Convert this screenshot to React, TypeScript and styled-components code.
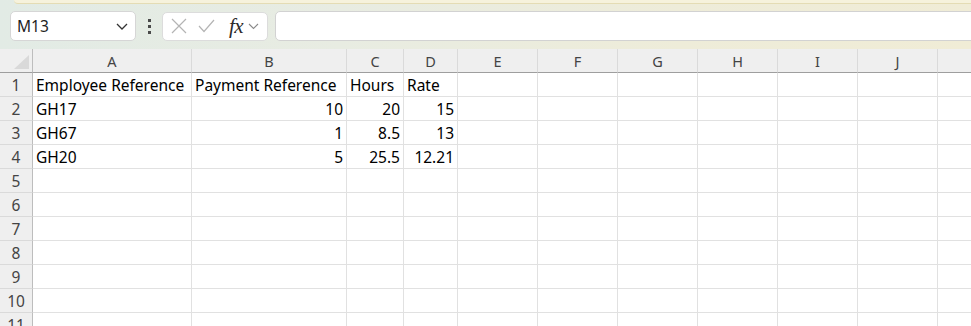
import React from "react";
import styled, { createGlobalStyle } from "styled-components";

const GlobalStyle = createGlobalStyle`
  html, body {
    margin: 0;
    padding: 0;
    background: #ffffff;
    overflow: hidden;
  }
  body {
    font-family: "Noto Sans", "Liberation Sans", sans-serif;
  }
`;

// K is only partly in view, its letter falls past the right edge
const COLUMNS = [
  { key: "A", label: "A", width: 159 },
  { key: "B", label: "B", width: 155 },
  { key: "C", label: "C", width: 57 },
  { key: "D", label: "D", width: 54 },
  { key: "E", label: "E", width: 80 },
  { key: "F", label: "F", width: 80 },
  { key: "G", label: "G", width: 80 },
  { key: "H", label: "H", width: 80 },
  { key: "I", label: "I", width: 80 },
  { key: "J", label: "J", width: 80 },
  { key: "K", label: "", width: 80 },
];

type CellValue = string | number | null;

const ROWS: CellValue[][] = [
  ["Employee Reference", "Payment Reference", "Hours", "Rate"],
  ["GH17", 10, 20, 15],
  ["GH67", 1, 8.5, 13],
  ["GH20", 5, 25.5, 12.21],
  [], [], [], [], [], [], [],
];

export default function App() {
  return (
    <>
      <GlobalStyle />
      <Page>
        <Toolbar>
          <TopStrip />
          <BarRow>
            <NameBox>
              <NameText>M13</NameText>
              <svg width="12" height="7" viewBox="0 0 12 7">
                <path d="M1 1 L6 6 L11 1" fill="none" stroke="#333" strokeWidth="1.3" />
              </svg>
            </NameBox>
            <Dots>
              <span />
              <span />
              <span />
            </Dots>
            <FormulaButtons>
              <svg width="16" height="16" viewBox="0 0 16 16">
                <path d="M1 1 L15 15 M15 1 L1 15" stroke="#b4b4b4" strokeWidth="1.2" />
              </svg>
              <svg width="17" height="14" viewBox="0 0 17 14">
                <path d="M1 7 L6 12.5 L16 1" fill="none" stroke="#b4b4b4" strokeWidth="1.2" />
              </svg>
              <Fx>fx</Fx>
              <svg width="11" height="7" viewBox="0 0 11 7">
                <path d="M1 1 L5.5 5.5 L10 1" fill="none" stroke="#8a8a8a" strokeWidth="1.1" />
              </svg>
            </FormulaButtons>
            <FormulaInput />
          </BarRow>
        </Toolbar>
        <Sheet $cols={COLUMNS.map((c) => `${c.width}px`).join(" ")}>
          <Corner>
            <CornerTriangle />
          </Corner>
          {COLUMNS.map((c) => (
            <ColHeader key={c.key}>{c.label}</ColHeader>
          ))}
          {ROWS.map((row, r) => (
            <React.Fragment key={r}>
              <RowHeader>{r + 1}</RowHeader>
              {COLUMNS.map((c, i) => {
                const v = row[i];
                const numeric = typeof v === "number";
                return (
                  <Cell key={c.key} $numeric={numeric}>
                    {v ?? ""}
                  </Cell>
                );
              })}
            </React.Fragment>
          ))}
        </Sheet>
      </Page>
    </>
  );
}

const Page = styled.div`
  width: 971px;
  height: 326px;
  overflow: hidden;
  display: flex;
  flex-direction: column;
`;

const Toolbar = styled.div`
  height: 49px;
  flex-shrink: 0;
  background: linear-gradient(90deg, #e2ebe5 0%, #e8ece2 35%, #eeecd9 70%, #f0ecd6 100%);
  display: flex;
  flex-direction: column;
`;

const TopStrip = styled.div`
  height: 3px;
  margin-left: 14px;
  background: #f6f2dc;
  border-bottom: 1px solid #e4dcb4;
  border-bottom-left-radius: 5px;
`;

const BarRow = styled.div`
  display: flex;
  align-items: center;
  margin-top: 7px;
  padding-left: 10px;
  height: 30px;
`;

const NameBox = styled.div`
  box-sizing: border-box;
  width: 126px;
  height: 30px;
  background: #ffffff;
  border: 1px solid #d6d6d6;
  border-radius: 5px;
  display: flex;
  align-items: center;
  justify-content: space-between;
  padding: 0 7px 0 6px;
`;

const NameText = styled.span`
  font-family: "Noto Sans", "Liberation Sans", sans-serif;
  font-size: 15.5px;
  color: #1f1f1f;
`;

const Dots = styled.div`
  width: 26px;
  display: flex;
  flex-direction: column;
  align-items: center;
  gap: 3px;

  span {
    width: 3px;
    height: 3px;
    background: #4a4a4a;
  }
`;

const FormulaButtons = styled.div`
  box-sizing: border-box;
  width: 106px;
  height: 29px;
  background: #ffffff;
  border: 1px solid #dcdcdc;
  border-radius: 5px;
  display: flex;
  align-items: center;
  padding: 0 4px 0 8px;
  gap: 11px;
`;

const Fx = styled.span`
  font-family: "Liberation Serif", "DejaVu Serif", serif;
  font-style: italic;
  font-size: 21px;
  color: #2b2b2b;
  margin-left: 3px;
  margin-right: -6px;
  line-height: 1;
  letter-spacing: -0.5px;
`;

const FormulaInput = styled.div`
  box-sizing: border-box;
  flex: 1;
  height: 30px;
  margin-left: 7px;
  margin-right: -10px;
  background: #ffffff;
  border: 1px solid #d2d2d2;
  border-radius: 5px;
`;

const Sheet = styled.div<{ $cols: string }>`
  display: grid;
  grid-template-columns: 33px ${({ $cols }) => $cols};
  grid-auto-rows: 24px;
  background: #ffffff;
`;

const Corner = styled.div`
  position: relative;
  background: #efefef;
  border-right: 1px solid #bdbdbd;
  border-bottom: 1px solid #9e9e9e;
  box-sizing: border-box;
`;

const CornerTriangle = styled.div`
  position: absolute;
  right: 3px;
  bottom: 3px;
  width: 0;
  height: 0;
  border-left: 15px solid transparent;
  border-bottom: 14px solid #d9d9d9;
`;

const ColHeader = styled.div`
  box-sizing: border-box;
  background: #efefef;
  border-right: 1px solid #dadada;
  border-bottom: 1px solid #9e9e9e;
  display: flex;
  align-items: center;
  justify-content: center;
  font-family: "Noto Sans", "Open Sans", sans-serif;
  font-size: 14.5px;
  color: #444444;
  padding-top: 1px;
`;

const RowHeader = styled.div`
  box-sizing: border-box;
  background: #efefef;
  border-right: 1px solid #bdbdbd;
  border-bottom: 1px solid #dadada;
  display: flex;
  align-items: center;
  justify-content: center;
  font-family: "Noto Sans", "Open Sans", sans-serif;
  font-size: 15.5px;
  color: #444444;
`;

const Cell = styled.div<{ $numeric: boolean }>`
  box-sizing: border-box;
  border-right: 1px solid #e1e1e1;
  border-bottom: 1px solid #e1e1e1;
  display: flex;
  align-items: flex-end;
  justify-content: ${({ $numeric }) => ($numeric ? "flex-end" : "flex-start")};
  padding: 0 3px 1px 3px;
  font-family: "Noto Sans", "Liberation Sans", sans-serif;
  font-size: 15.5px;
  color: #000000;
  white-space: nowrap;
  overflow: visible;
  line-height: 20px;
`;
